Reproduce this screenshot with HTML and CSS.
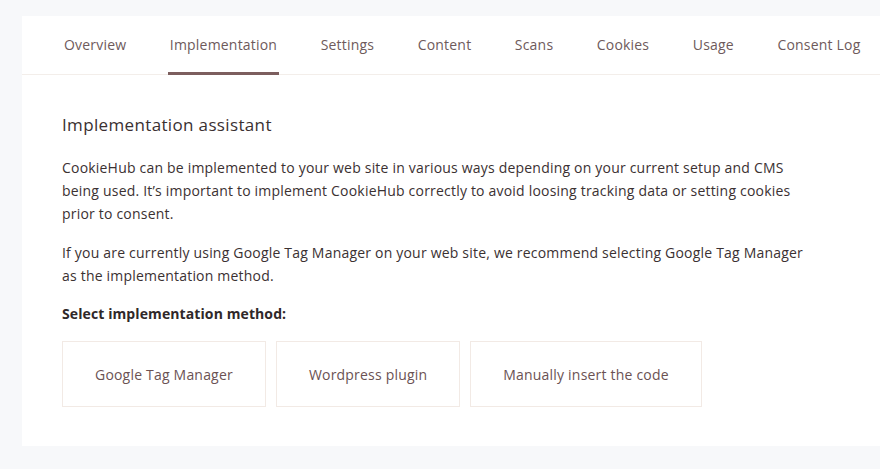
FILE: index.html
```html
<!DOCTYPE html>
<html lang="en">
<head>
<meta charset="utf-8">
<title>Implementation</title>
<link rel="stylesheet" href="styles.css">
</head>
<body>
<div class="page">
  <div class="card">
    <nav class="tabs">
      <a class="tab">Overview</a>
      <a class="tab active">Implementation</a>
      <a class="tab">Settings</a>
      <a class="tab">Content</a>
      <a class="tab">Scans</a>
      <a class="tab">Cookies</a>
      <a class="tab">Usage</a>
      <a class="tab">Consent Log</a>
    </nav>
    <section class="content">
      <h2 class="title">Implementation assistant</h2>
      <p class="text">CookieHub can be implemented to your web site in various ways depending on your current setup and CMS being used. It’s important to implement CookieHub correctly to avoid loosing tracking data or setting cookies prior to consent.</p>
      <p class="text">If you are currently using Google Tag Manager on your web site, we recommend selecting Google Tag Manager as the implementation method.</p>
      <p class="label">Select implementation method:</p>
      <div class="methods">
        <button class="method">Google Tag Manager</button>
        <button class="method">Wordpress plugin</button>
        <button class="method">Manually insert the code</button>
      </div>
    </section>
  </div>
</div>
</body>
</html>
```
FILE: styles.css
```css
* { box-sizing: border-box; }
html, body { margin: 0; padding: 0; }
body {
  background: #f7f8fa;
  font-family: "Open Sans", "DejaVu Sans", sans-serif;
  color: #3b3132;
  width: 880px;
  height: 469px;
  overflow: hidden;
}
.page {
  padding: 16px 0 0 22px;
}
.card {
  background: #ffffff;
  width: 870px;
  height: 430px;
}
.tabs {
  display: flex;
  gap: 39.5px;
  padding: 0 0 0 40px;
  height: 59px;
  border-bottom: 1px solid #f3eeea;
}
.tab {
  display: flex;
  align-items: center;
  padding: 0 2px;
  font-size: 14px;
  letter-spacing: 0.2px;
  color: #6e5a5b;
  border-bottom: 3px solid transparent;
  margin-bottom: -1px;
  white-space: nowrap;
}
.tab.active {
  border-bottom-color: #7c5e5e;
}
.content {
  padding: 38px 0 0 40px;
  width: 790px;
}
.title {
  margin: 0 0 19px;
  font-size: 17px;
  font-weight: 500;
  letter-spacing: 0.35px;
  line-height: 24px;
  color: #3a3031;
}
.text {
  margin: 0 0 16px;
  font-size: 14px;
  letter-spacing: 0.2px;
  line-height: 23px;
  color: #3b3132;
}
.label {
  margin: 17px 0 17px;
  font-size: 14px;
  font-weight: 700;
  letter-spacing: 0.1px;
  line-height: 20px;
  color: #2f2829;
}
.methods {
  display: flex;
  gap: 10px;
}
.method {
  height: 66px;
  padding: 0 32px;
  background: #ffffff;
  border: 1px solid #f2eae5;
  font-family: inherit;
  font-size: 14px;
  letter-spacing: 0.2px;
  color: #6b5253;
  cursor: pointer;
}
```
